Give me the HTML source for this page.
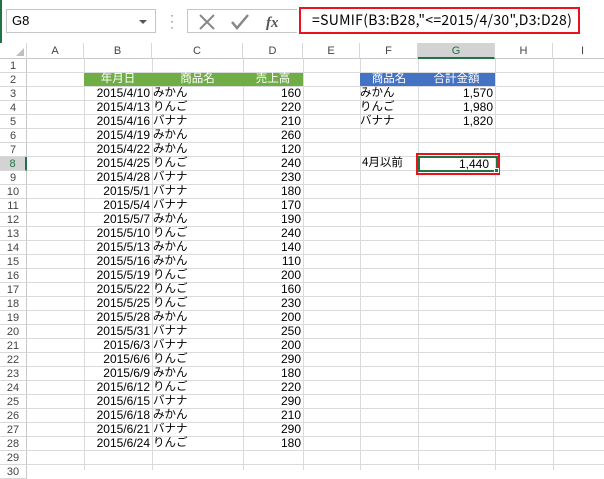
<!DOCTYPE html>
<html><head><meta charset="utf-8"><style>
*{margin:0;padding:0;box-sizing:border-box}
body{width:604px;height:470px;overflow:hidden;background:#fff;position:relative;font-family:"Liberation Sans","Noto Sans CJK JP",sans-serif;font-size:11px;color:#000}
.nb{position:absolute;left:6px;top:9px;width:150px;height:24px;border:1px solid #c6c6c6;font-size:13px;line-height:22px;padding-left:5px}
.nb:after{content:"";position:absolute;right:8px;top:10px;border:4px solid transparent;border-top:4px solid #555}
.dots{position:absolute;left:170px;top:12px;font-size:12px;color:#666;line-height:6px;width:3px}
.fxb{position:absolute;left:187px;top:9px;width:110px;height:24px;border:1px solid #c6c6c6;border-right:none}
.fml{position:absolute;left:299px;top:7px;width:281px;height:27px;border:2px solid #e8141c;font-size:14px;line-height:23px;padding-left:11px;letter-spacing:0.3px;font-family:"Noto Sans CJK JP",sans-serif}
.hdr{position:absolute;top:43px;left:0;height:16px;width:604px;background:#fff;border-bottom:1px solid #c8c8c8}
.hdr span{position:absolute;top:0;height:16px;line-height:16px;text-align:center;color:#444;font-size:11px;border-right:1px solid #d8d8d8}
.rh{position:absolute;left:0;width:27px;height:14px;line-height:14px;text-align:center;color:#444;font-size:11px;border-bottom:1px solid #d8d8d8;border-right:1px solid #c8c8c8;background:#fff}
.grid{position:absolute;left:27px;top:59px;width:577px;height:411px;
background:repeating-linear-gradient(to bottom,transparent 0,transparent 13px,#dadada 13px,#dadada 14px)}
.v{position:absolute;top:59px;height:411px;width:1px;background:#dadada}
.c{position:absolute;height:14px;line-height:13px;white-space:nowrap;font-family:"Noto Sans CJK JP","Liberation Sans",sans-serif;font-size:11.5px}
.r{text-align:right;padding-right:2px}
.n{font-family:"Liberation Sans",sans-serif;font-size:12px;position:relative;top:1px}
</style></head><body>
<div style="position:absolute;left:0;top:0;width:2px;height:470px;background:#217346"></div>
<div class="nb">G8</div>
<div class="dots">·<br>·<br>·</div>
<div class="fxb">
<svg width="110" height="24" style="position:absolute;left:0;top:0">
<path d="M12 5 L26 19 M26 5 L12 19" stroke="#888" stroke-width="2" fill="none"/>
<path d="M44 12 L49 18 L60 5" stroke="#888" stroke-width="2.5" fill="none"/>
<text x="78" y="17" font-family="Liberation Serif" font-style="italic" font-weight="bold" font-size="15" fill="#555">fx</text>
</svg></div>
<div class="fml">=SUMIF(B3:B28,"&lt;=2015/4/30",D3:D28)</div>

<div class="hdr">
<span style="left:0;width:27px"><svg width="10" height="10" style="position:absolute;left:15px;top:4px"><path d="M9 1 L9 9 L1 9Z" fill="#c0c0c0"/></svg></span>
<span style="left:27px;width:57px">A</span>
<span style="left:84px;width:68px">B</span>
<span style="left:152px;width:91px">C</span>
<span style="left:243px;width:60px">D</span>
<span style="left:303px;width:57px">E</span>
<span style="left:360px;width:58px">F</span>
<span style="left:418px;width:77px;background:#d3d3d3;color:#217346;border-bottom:2px solid #217346">G</span>
<span style="left:495px;width:58px">H</span>
<span style="left:553px;width:60px">I</span>
</div>

<div class="grid"></div>
<div class="v" style="left:84px"></div><div class="v" style="left:152px"></div><div class="v" style="left:243px"></div><div class="v" style="left:303px"></div><div class="v" style="left:360px"></div><div class="v" style="left:418px"></div><div class="v" style="left:495px"></div><div class="v" style="left:553px"></div>

<div class="rh" style="top:59px">1</div><div class="rh" style="top:73px">2</div><div class="rh" style="top:87px">3</div><div class="rh" style="top:101px">4</div><div class="rh" style="top:115px">5</div><div class="rh" style="top:129px">6</div><div class="rh" style="top:143px">7</div><div class="rh" style="top:157px;background:#d3d3d3;color:#217346;border-right:2px solid #217346">8</div><div class="rh" style="top:171px">9</div><div class="rh" style="top:185px">10</div><div class="rh" style="top:199px">11</div><div class="rh" style="top:213px">12</div><div class="rh" style="top:227px">13</div><div class="rh" style="top:241px">14</div><div class="rh" style="top:255px">15</div><div class="rh" style="top:269px">16</div><div class="rh" style="top:283px">17</div><div class="rh" style="top:297px">18</div><div class="rh" style="top:311px">19</div><div class="rh" style="top:325px">20</div><div class="rh" style="top:339px">21</div><div class="rh" style="top:353px">22</div><div class="rh" style="top:367px">23</div><div class="rh" style="top:381px">24</div><div class="rh" style="top:395px">25</div><div class="rh" style="top:409px">26</div><div class="rh" style="top:423px">27</div><div class="rh" style="top:437px">28</div><div class="rh" style="top:451px">29</div><div class="rh" style="top:465px">30</div>

<div class="c" style="left:84px;top:73px;width:219px;height:13px;background:#70ad47"></div>
<div class="c" style="left:84px;top:72px;width:68px;text-align:center;color:#fff">年月日</div>
<div class="c" style="left:152px;top:72px;width:91px;text-align:center;color:#fff">商品名</div>
<div class="c" style="left:243px;top:72px;width:60px;text-align:center;color:#fff">売上高</div>
<div class="c" style="left:360px;top:73px;width:135px;height:13px;background:#4472c4"></div>
<div class="c" style="left:360px;top:72px;width:58px;text-align:center;color:#fff">商品名</div>
<div class="c" style="left:418px;top:72px;width:77px;text-align:center;color:#fff">合計金額</div>

<div class="c" style="left:360px;top:86px">みかん</div><div class="c r" style="left:418px;top:86px;width:77px"><span class="n">1,570</span></div>
<div class="c" style="left:360px;top:100px">りんご</div><div class="c r" style="left:418px;top:100px;width:77px"><span class="n">1,980</span></div>
<div class="c" style="left:360px;top:114px">バナナ</div><div class="c r" style="left:418px;top:114px;width:77px"><span class="n">1,820</span></div>
<div class="c" style="left:362px;top:156px">4月以前</div>
<div style="position:absolute;left:416px;top:153px;width:84px;height:22px;border:2px solid #e8141c"></div>
<div style="position:absolute;left:418px;top:156px;width:80px;height:16px;border:2px solid #217346"></div>
<div style="position:absolute;left:494px;top:168px;width:5px;height:5px;background:#217346;border:1px solid #fff"></div>
<div class="c r" style="left:418px;top:157px;width:76px;padding-right:5px"><span class="n">1,440</span></div>

<div class="c r" style="left:84px;top:86px;width:68px"><span class="n">2015/4/10</span></div><div class="c" style="left:153px;top:86px">みかん</div><div class="c r" style="left:243px;top:86px;width:60px"><span class="n">160</span></div>
<div class="c r" style="left:84px;top:100px;width:68px"><span class="n">2015/4/13</span></div><div class="c" style="left:153px;top:100px">りんご</div><div class="c r" style="left:243px;top:100px;width:60px"><span class="n">220</span></div>
<div class="c r" style="left:84px;top:114px;width:68px"><span class="n">2015/4/16</span></div><div class="c" style="left:153px;top:114px">バナナ</div><div class="c r" style="left:243px;top:114px;width:60px"><span class="n">210</span></div>
<div class="c r" style="left:84px;top:128px;width:68px"><span class="n">2015/4/19</span></div><div class="c" style="left:153px;top:128px">みかん</div><div class="c r" style="left:243px;top:128px;width:60px"><span class="n">260</span></div>
<div class="c r" style="left:84px;top:142px;width:68px"><span class="n">2015/4/22</span></div><div class="c" style="left:153px;top:142px">みかん</div><div class="c r" style="left:243px;top:142px;width:60px"><span class="n">120</span></div>
<div class="c r" style="left:84px;top:156px;width:68px"><span class="n">2015/4/25</span></div><div class="c" style="left:153px;top:156px">りんご</div><div class="c r" style="left:243px;top:156px;width:60px"><span class="n">240</span></div>
<div class="c r" style="left:84px;top:170px;width:68px"><span class="n">2015/4/28</span></div><div class="c" style="left:153px;top:170px">バナナ</div><div class="c r" style="left:243px;top:170px;width:60px"><span class="n">230</span></div>
<div class="c r" style="left:84px;top:184px;width:68px"><span class="n">2015/5/1</span></div><div class="c" style="left:153px;top:184px">バナナ</div><div class="c r" style="left:243px;top:184px;width:60px"><span class="n">180</span></div>
<div class="c r" style="left:84px;top:198px;width:68px"><span class="n">2015/5/4</span></div><div class="c" style="left:153px;top:198px">バナナ</div><div class="c r" style="left:243px;top:198px;width:60px"><span class="n">170</span></div>
<div class="c r" style="left:84px;top:212px;width:68px"><span class="n">2015/5/7</span></div><div class="c" style="left:153px;top:212px">みかん</div><div class="c r" style="left:243px;top:212px;width:60px"><span class="n">190</span></div>
<div class="c r" style="left:84px;top:226px;width:68px"><span class="n">2015/5/10</span></div><div class="c" style="left:153px;top:226px">りんご</div><div class="c r" style="left:243px;top:226px;width:60px"><span class="n">240</span></div>
<div class="c r" style="left:84px;top:240px;width:68px"><span class="n">2015/5/13</span></div><div class="c" style="left:153px;top:240px">みかん</div><div class="c r" style="left:243px;top:240px;width:60px"><span class="n">140</span></div>
<div class="c r" style="left:84px;top:254px;width:68px"><span class="n">2015/5/16</span></div><div class="c" style="left:153px;top:254px">みかん</div><div class="c r" style="left:243px;top:254px;width:60px"><span class="n">110</span></div>
<div class="c r" style="left:84px;top:268px;width:68px"><span class="n">2015/5/19</span></div><div class="c" style="left:153px;top:268px">りんご</div><div class="c r" style="left:243px;top:268px;width:60px"><span class="n">200</span></div>
<div class="c r" style="left:84px;top:282px;width:68px"><span class="n">2015/5/22</span></div><div class="c" style="left:153px;top:282px">りんご</div><div class="c r" style="left:243px;top:282px;width:60px"><span class="n">160</span></div>
<div class="c r" style="left:84px;top:296px;width:68px"><span class="n">2015/5/25</span></div><div class="c" style="left:153px;top:296px">りんご</div><div class="c r" style="left:243px;top:296px;width:60px"><span class="n">230</span></div>
<div class="c r" style="left:84px;top:310px;width:68px"><span class="n">2015/5/28</span></div><div class="c" style="left:153px;top:310px">みかん</div><div class="c r" style="left:243px;top:310px;width:60px"><span class="n">200</span></div>
<div class="c r" style="left:84px;top:324px;width:68px"><span class="n">2015/5/31</span></div><div class="c" style="left:153px;top:324px">バナナ</div><div class="c r" style="left:243px;top:324px;width:60px"><span class="n">250</span></div>
<div class="c r" style="left:84px;top:338px;width:68px"><span class="n">2015/6/3</span></div><div class="c" style="left:153px;top:338px">バナナ</div><div class="c r" style="left:243px;top:338px;width:60px"><span class="n">200</span></div>
<div class="c r" style="left:84px;top:352px;width:68px"><span class="n">2015/6/6</span></div><div class="c" style="left:153px;top:352px">りんご</div><div class="c r" style="left:243px;top:352px;width:60px"><span class="n">290</span></div>
<div class="c r" style="left:84px;top:366px;width:68px"><span class="n">2015/6/9</span></div><div class="c" style="left:153px;top:366px">みかん</div><div class="c r" style="left:243px;top:366px;width:60px"><span class="n">180</span></div>
<div class="c r" style="left:84px;top:380px;width:68px"><span class="n">2015/6/12</span></div><div class="c" style="left:153px;top:380px">りんご</div><div class="c r" style="left:243px;top:380px;width:60px"><span class="n">220</span></div>
<div class="c r" style="left:84px;top:394px;width:68px"><span class="n">2015/6/15</span></div><div class="c" style="left:153px;top:394px">バナナ</div><div class="c r" style="left:243px;top:394px;width:60px"><span class="n">290</span></div>
<div class="c r" style="left:84px;top:408px;width:68px"><span class="n">2015/6/18</span></div><div class="c" style="left:153px;top:408px">みかん</div><div class="c r" style="left:243px;top:408px;width:60px"><span class="n">210</span></div>
<div class="c r" style="left:84px;top:422px;width:68px"><span class="n">2015/6/21</span></div><div class="c" style="left:153px;top:422px">バナナ</div><div class="c r" style="left:243px;top:422px;width:60px"><span class="n">290</span></div>
<div class="c r" style="left:84px;top:436px;width:68px"><span class="n">2015/6/24</span></div><div class="c" style="left:153px;top:436px">りんご</div><div class="c r" style="left:243px;top:436px;width:60px"><span class="n">180</span></div>
</body></html>
